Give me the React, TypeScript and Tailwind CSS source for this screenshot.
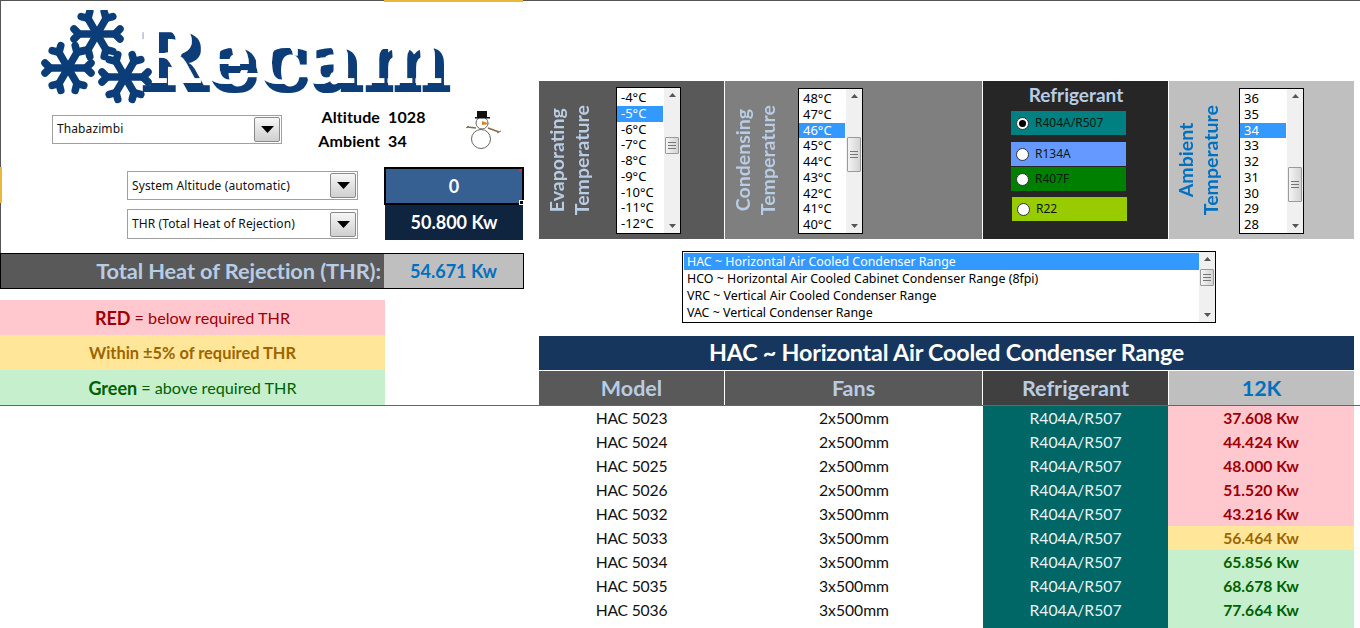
import React from "react";

const calibri = "font-['Lato','Liberation_Sans',sans-serif]";
const tahoma = "font-['Noto_Sans','Liberation_Sans',sans-serif]";

function Tri({ up = false }: { up?: boolean }) {
  return (
    <svg width="7" height="4" viewBox="0 0 7 4" className="block">
      <path d={up ? "M3.5 0L7 4H0Z" : "M0 0H7L3.5 4Z"} fill="#555" />
    </svg>
  );
}

function Thumb({ className }: { className: string }) {
  return (
    <div className={`w-[14px] rounded-[1px] border border-[#9a9a9a] bg-gradient-to-r from-[#f4f4f4] to-[#d4d4d4] flex flex-col items-center justify-center gap-[2px] ${className}`}>
      <div className="h-px w-[8px] bg-[#777]" />
      <div className="h-px w-[8px] bg-[#777]" />
      <div className="h-px w-[8px] bg-[#777]" />
    </div>
  );
}

function Scrollbar({ thumb, h }: { thumb: string; h: string }) {
  return (
    <div className={`w-[16px] bg-[#f0f0f0] flex flex-col items-center ${h}`}>
      <div className="h-[14px] flex items-center"><Tri up /></div>
      <Thumb className={thumb} />
      <div className="mt-auto h-[14px] flex items-center"><Tri /></div>
    </div>
  );
}

function ListBox({ items, sel, thumb, top }: { items: string[]; sel: string; thumb: string; top: string }) {
  return (
    <div className={`w-[65px] border border-black bg-white flex shrink-0 ${top}`}>
      <div className={`flex-1 pt-[2px] ${tahoma} text-[13px] text-black`}>
        {items.map((t) => (
          <div key={t} className={`h-[15.75px] leading-[15.75px] pl-[4px] mr-px ${t === sel ? "bg-[#3399ff] text-white" : ""}`}>
            {t}
          </div>
        ))}
      </div>
      <Scrollbar thumb={thumb} h="h-full" />
    </div>
  );
}

function Combo({ text, className }: { text: string; className: string }) {
  return (
    <div className={`border border-[#a0a0a0] bg-white flex items-center pl-[4px] pr-[1px] ${className}`}>
      <span className={`flex-1 ${tahoma} text-[12px] tracking-[0.1px] text-[#111]`}>{text}</span>
      <div className="w-[26px] h-[25px] rounded-[2px] border border-[#8a8a8a] bg-gradient-to-b from-[#f7f7f7] to-[#cfcfcf] flex items-center justify-center">
        <svg width="13" height="7" viewBox="0 0 13 7"><path d="M0 0H13L6.5 7Z" fill="#000" /></svg>
      </div>
    </div>
  );
}

function Vertical({ a, b, className }: { a: string; b: string; className: string }) {
  return (
    <div className={`[writing-mode:vertical-rl] rotate-180 text-center ${calibri} font-bold text-[19.5px] leading-[25px] shrink-0 ${className}`}>
      {a}
      <br />
      {b}
    </div>
  );
}

function Radio({ label, on, className }: { label: string; on?: boolean; className: string }) {
  return (
    <div className={`h-[24px] w-[115px] flex items-center pl-[5px] gap-[6px] ${className}`}>
      <div className="w-[13px] h-[13px] rounded-full bg-white border border-[#333] flex items-center justify-center">
        {on && <div className="w-[7px] h-[7px] rounded-full bg-black" />}
      </div>
      <span className={`${tahoma} text-[12px] text-[#0b1a10]`}>{label}</span>
    </div>
  );
}

function Flake({ x, y }: { x: number; y: number }) {
  return (
    <g transform={`translate(${x} ${y})`} stroke="#0b3d78" strokeLinecap="round" fill="none">
      {[0, 60, 120, 180, 240, 300].map((r) => (
        <g key={r} transform={`rotate(${r})`}>
          <path d="M0 0H19" strokeWidth="7.5" />
          <path d="M18 0L23 -5M18 0L23 5" strokeWidth="7.5" />
        </g>
      ))}
    </g>
  );
}

function Logo() {
  return (
    <svg width="414" height="94" viewBox="0 0 414 94" className="block" aria-label="Recam">
      <defs>
        <filter id="recam-shade" x="-5%" y="-20%" width="115%" height="140%">
          <feMorphology in="SourceAlpha" operator="dilate" radius="1" result="fat" />
          <feOffset in="fat" dx="8" dy="8" result="moved" />
          <feFlood floodColor="#0b3d78" />
          <feComposite in2="moved" operator="in" result="shade" />
          <feMerge>
            <feMergeNode in="shade" />
            <feMergeNode in="SourceGraphic" />
          </feMerge>
        </filter>
      </defs>
      <text
        x="92"
        y="73"
        textLength="311"
        lengthAdjust="spacingAndGlyphs"
        fill="#ffffff"
        filter="url(#recam-shade)"
        style={{ fontFamily: "'DejaVu Serif', serif", fontWeight: 700, fontSize: 78 }}
      >
        Recam
      </text>
      <Flake x={57} y={24} />
      <Flake x={28} y={58} />
      <Flake x={85} y={67} />
    </svg>
  );
}

function Snowman() {
  return (
    <svg width="38" height="42" viewBox="0 0 38 42" className="block">
      <circle cx="17" cy="31" r="9.5" fill="#fff" stroke="#666" />
      <circle cx="18" cy="15" r="6" fill="#fff" stroke="#666" />
      <rect x="13" y="3" width="10" height="6" fill="#111" />
      <rect x="11" y="9" width="15" height="1.5" fill="#111" />
      <path d="M18 13L26 16L18 17Z" fill="#d9822b" />
      <path d="M3 19L12 20M24 20L35 24" stroke="#8a6a4a" strokeWidth="1.5" />
      <path d="M2 20L5 18M33 25L37 23" stroke="#8a6a4a" />
    </svg>
  );
}

const rows: [string, string, string, "r" | "y" | "g"][] = [
  ["HAC 5023", "2x500mm", "37.608 Kw", "r"],
  ["HAC 5024", "2x500mm", "44.424 Kw", "r"],
  ["HAC 5025", "2x500mm", "48.000 Kw", "r"],
  ["HAC 5026", "2x500mm", "51.520 Kw", "r"],
  ["HAC 5032", "3x500mm", "43.216 Kw", "r"],
  ["HAC 5033", "3x500mm", "56.464 Kw", "y"],
  ["HAC 5034", "3x500mm", "65.856 Kw", "g"],
  ["HAC 5035", "3x500mm", "68.678 Kw", "g"],
  ["HAC 5036", "3x500mm", "77.664 Kw", "g"],
  ["", "", "", "g"],
];

const valueCls = {
  r: "bg-[#ffc7ce] text-[#9c0006]",
  y: "bg-[#ffe699] text-[#9c6500]",
  g: "bg-[#c6efce] text-[#006100]",
};

export default function App() {
  return (
    <div className={`relative h-[628px] w-[1360px] overflow-hidden bg-white ${calibri}`}>
      <div className="flex h-px bg-[#555]">
        <div className="ml-[384px] w-[139px] h-[2px] bg-[#e8b93c]" />
      </div>
      <div className="absolute left-0 top-[167px] h-[36px] w-[2px] bg-[#e8b93c]" />
      <div className="flex h-[405px] border-b border-[#666]">
        {/* Left column */}
        <div className="w-[539px] shrink-0 flex flex-col">
          <div className="border-l border-[#555] h-[252px] flex flex-col">
            <div className="pl-[39px] pt-[9px] h-[106px]">
              <Logo />
            </div>
            <div className="flex items-center h-[44px] pl-[51px]">
              <Combo text="Thabazimbi" className="w-[230px] h-[29px]" />
              <div className="ml-[33px] w-[112px] grid grid-cols-[65px_38px] gap-x-[8px] gap-y-[5px] font-bold text-[16px] tracking-[0.1px] leading-[19px] text-black -mt-[2px]">
                <span className="text-right">Altitude</span>
                <span>1028</span>
                <span className="text-right">Ambient</span>
                <span>34</span>
              </div>
              <div className="ml-[37px]"><Snowman /></div>
            </div>
            <div className="flex pl-[126px] pt-[16px]">
              <div className="flex flex-col gap-[9px] pt-[4px] w-[257px]">
                <Combo text="System Altitude (automatic)" className="w-[231px] h-[29px]" />
                <Combo text="THR (Total Heat of Rejection)" className="w-[231px] h-[30px]" />
              </div>
              <div className="w-[140px] flex flex-col">
                <div className="relative h-[38px] border-2 border-black bg-[#366092] text-white font-bold text-[18px] flex items-center justify-center">
                  0
                  <div className="absolute -right-[2px] -bottom-[2px] w-[5px] h-[5px] bg-black border border-white" />
                  <div className="absolute top-0 right-0 w-[3px] h-[3px] bg-[#e0245e]" />
                </div>
                <div className="h-[35px] mx-px bg-[#0f243e] text-white font-bold text-[18px] flex items-center justify-center">
                  50.800 Kw
                </div>
              </div>
            </div>
          </div>
          <div className="w-[524px] h-[36px] border border-black flex">
            <div className="w-[383px] bg-[#595959] text-[#b8cce4] font-bold text-[21.8px] flex items-center justify-end pr-[3px] tracking-[-0.1px]">
              Total Heat of Rejection (THR):
            </div>
            <div className="flex-1 bg-[#bfbfbf] text-[#0070c0] font-bold text-[18px] flex items-center justify-center pt-px">
              54.671 Kw
            </div>
          </div>
          <div className="mt-[11px] w-[385px] flex flex-col text-center text-[16.2px]">
            <div className="h-[35px] pt-[2px] bg-[#ffc7ce] text-[#9c0006] flex items-center justify-center gap-[4px]">
              <b className="text-[18px]">RED</b> = below required THR
            </div>
            <div className="h-[35px] pt-[2px] bg-[#ffe699] text-[#9c6500] font-bold text-[16.4px] flex items-center justify-center">
              Within ±5% of required THR
            </div>
            <div className="h-[35px] pt-[2px] bg-[#c6efce] text-[#006100] flex items-center justify-center gap-[4px]">
              <b className="text-[18px]">Green</b> = above required THR
            </div>
          </div>
        </div>

        {/* Right column */}
        <div className="w-[815px] shrink-0 flex flex-col pt-[80px]">
          <div className="flex h-[158px] gap-px">
            <div className="w-[185px] bg-[#595959] flex items-center pl-[5px]">
              <Vertical a="Evaporating" b="Temperature" className="w-[50px] text-[#b8cce4]" />
              <ListBox
                top="ml-[22px] h-[147px] self-start mt-[6px]"
                items={["-4°C", "-5°C", "-6°C", "-7°C", "-8°C", "-9°C", "-10°C", "-11°C", "-12°C"]}
                sel="-5°C"
                thumb="h-[17px] mt-[35px]"
              />
            </div>
            <div className="w-[257px] bg-[#7f7f7f] flex items-center pl-[5px]">
              <Vertical a="Condensing" b="Temperature" className="w-[50px] text-[#b8cce4]" />
              <ListBox
                top="ml-[18px] h-[146px] self-start mt-[7px]"
                items={["48°C", "47°C", "46°C", "45°C", "44°C", "43°C", "42°C", "41°C", "40°C"]}
                sel="46°C"
                thumb="h-[35px] mt-[34px]"
              />
            </div>
            <div className="w-[185px] bg-[#262626] flex flex-col items-start pl-[28px]">
              <div className="w-[115px] pl-[15px] text-center text-[#b8cce4] font-bold text-[19px] leading-[22px] mt-[3px] mb-[5px] whitespace-nowrap">Refrigerant</div>
              <Radio label="R404A/R507" on className="bg-[#008080]" />
              <Radio label="R134A" className="bg-[#6699ff] mt-[7px]" />
              <Radio label="R407F" className="bg-[#008000] mt-px" />
              <Radio label="R22" className="bg-[#99cc00] mt-[6px] ml-px" />
            </div>
            <div className="w-[185px] bg-[#bfbfbf] flex items-center pl-[4px]">
              <Vertical a="Ambient" b="Temperature" className="w-[50px] text-[#0070c0]" />
              <ListBox
                top="ml-[16px] h-[146px] self-start mt-[7px]"
                items={["36", "35", "34", "33", "32", "31", "30", "29", "28"]}
                sel="34"
                thumb="h-[35px] mt-[64px]"
              />
            </div>
          </div>
          <div className={`ml-[143px] mt-[12px] w-[534px] h-[72px] border border-black bg-white flex ${tahoma} text-[12.4px] text-black`}>
            <div className="flex-1 pt-px pl-px">
              {[
                "HAC ~ Horizontal Air Cooled Condenser Range",
                "HCO ~ Horizontal Air Cooled Cabinet Condenser Range (8fpi)",
                "VRC ~ Vertical Air Cooled Condenser Range",
                "VAC ~ Vertical Condenser Range",
              ].map((t, i) => (
                <div key={t} className={`h-[17px] leading-[17px] pl-[3px] ${i === 0 ? "bg-[#3399ff] text-white" : ""}`}>{t}</div>
              ))}
            </div>
            <Scrollbar thumb="h-[17px] mt-[3px]" h="h-full" />
          </div>
          <div className="mt-[13px] h-[34px] pb-[2px] bg-[#17365d] text-white font-bold text-[23.3px] flex items-center justify-center tracking-[-0.2px]">
            HAC ~ Horizontal Air Cooled Condenser Range
          </div>
          <div className="mt-px flex h-[34px] gap-px font-bold text-[21.5px]">
            <div className="w-[185px] bg-[#595959] text-[#b8cce4] flex items-center justify-center">Model</div>
            <div className="w-[257px] bg-[#595959] text-[#b8cce4] flex items-center justify-center">Fans</div>
            <div className="w-[185px] bg-[#404040] text-[#b8cce4] flex items-center justify-center">Refrigerant</div>
            <div className="w-[185px] bg-[#bfbfbf] text-[#0070c0] flex items-center justify-center">12K</div>
          </div>
        </div>
      </div>

      {/* Table rows */}
      <div className="ml-[539px] w-[815px] flex flex-col">
        {rows.map(([m, f, v, c], i) => (
          <div key={i} className="flex h-[24px] text-[15.7px] text-[#111]">
            <div className="w-[186px] pt-[2px] flex items-center justify-center pr-[1px] tracking-[-0.2px]">
              {m}
            </div>
            <div className="w-[258px] pt-[2px] flex items-center justify-center">{f}</div>
            <div className="w-[185px] pt-[2px] bg-[#006666] text-[#e6f2f2] flex items-center justify-center">R404A/R507</div>
            <div className={`w-[186px] pt-[2px] font-bold flex items-center justify-center ${valueCls[c]}`}>{v}</div>
          </div>
        ))}
      </div>
    </div>
  );
}
